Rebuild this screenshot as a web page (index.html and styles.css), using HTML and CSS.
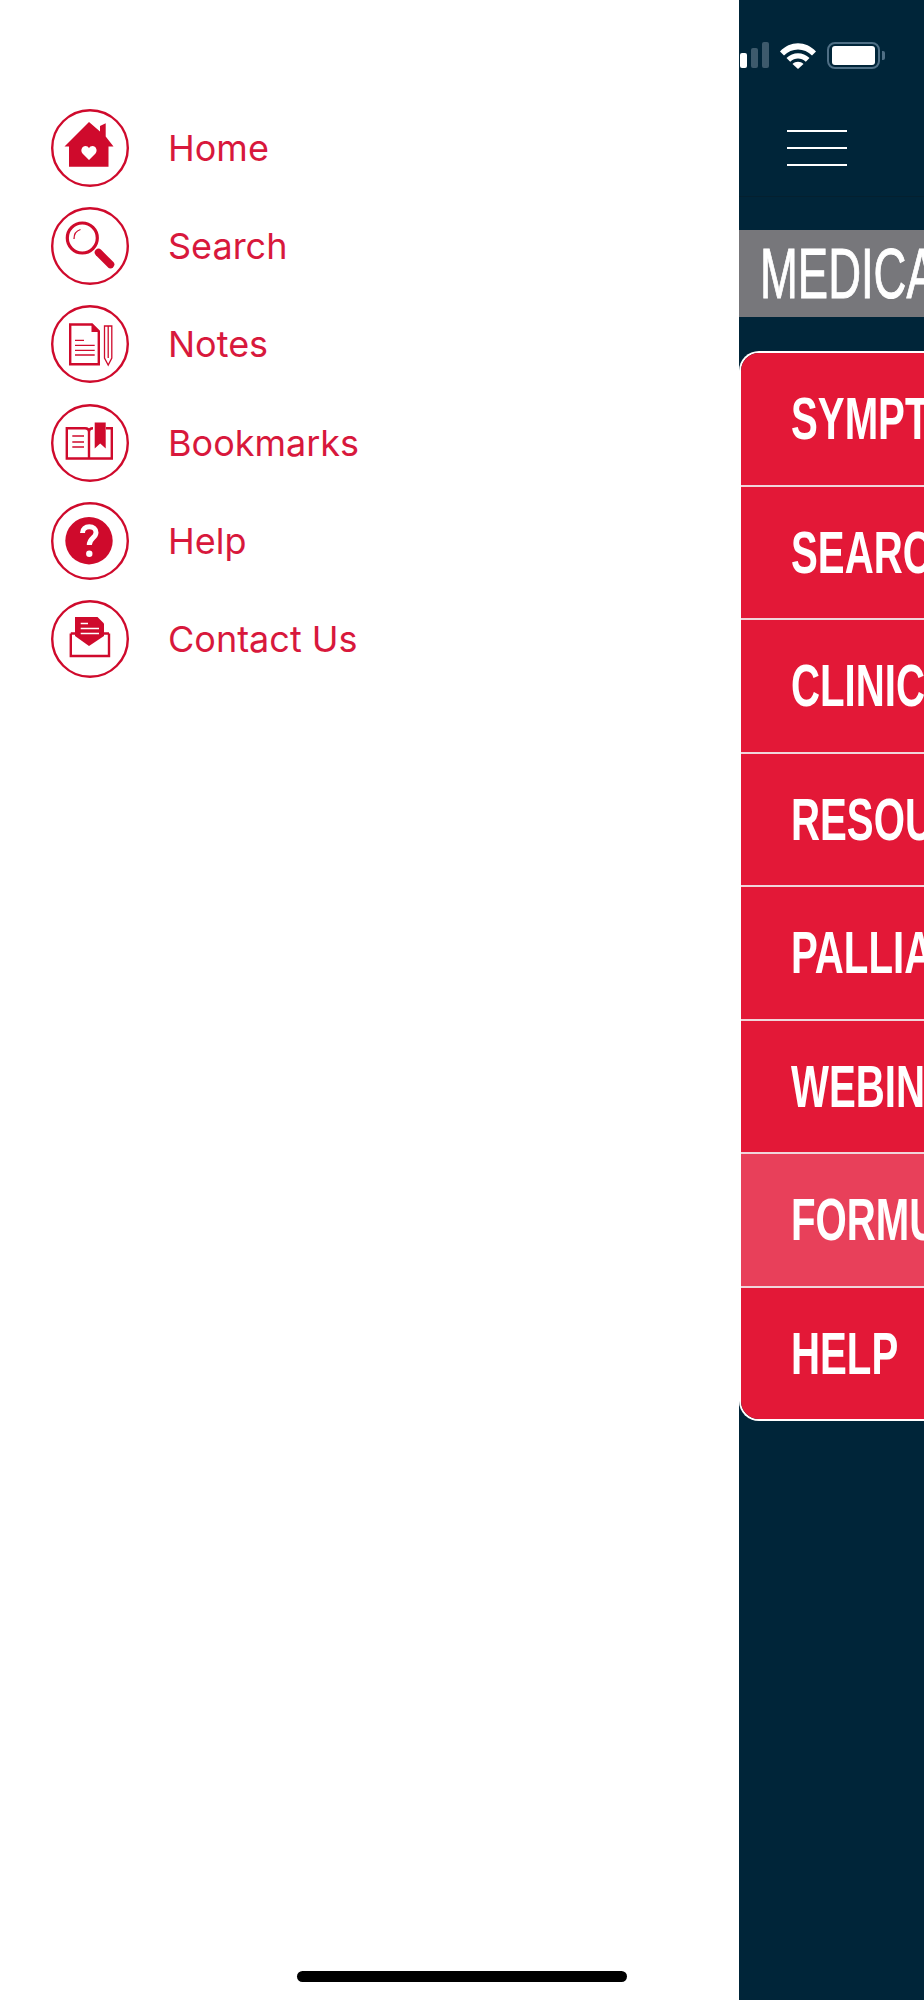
FILE: index.html
```html
<!DOCTYPE html>
<html lang="en">
<head>
    <meta charset="UTF-8">
    <meta name="viewport" content="width=device-width, initial-scale=1.0">
    <title>Menu</title>
    <link rel="stylesheet" href="styles.css">
</head>
<body>

    <nav class="drawer">
        <a class="drawer-item">
            <svg class="drawer-icon" viewBox="0 0 78 78">
                <circle class="ring" cx="39" cy="39" r="37.8"/>
                <path class="solid" d="M38 13 L49 22.5 V17 L54.7 14.3 V27.5 L62.5 37.5 H57.5 V57.7 H18 V37.5 H13.5 Z"/>
                <path class="cut" d="M38 51 L31.5 44.5 C29 41.5 31 37 34.5 37 C36 37 37.3 37.8 38 39.2 C38.7 37.8 40 37 41.5 37 C45 37 47 41.5 44.5 44.5 Z"/>
            </svg>
            <span>Home</span>
        </a>
        <a class="drawer-item">
            <svg class="drawer-icon" viewBox="0 0 78 78">
                <circle class="ring" cx="39" cy="39" r="37.8"/>
                <circle class="line thick" cx="31.3" cy="31" r="15"/>
                <path class="line thin" d="M23 32 C23 27 26 23.5 29.5 22.5"/>
                <path class="handle" d="M47.5 45.5 L59.5 57.5"/>
            </svg>
            <span>Search</span>
        </a>
        <a class="drawer-item">
            <svg class="drawer-icon" viewBox="0 0 78 78">
                <circle class="ring" cx="39" cy="39" r="37.8"/>
                <path class="line" d="M19.2 19.5 H41 L47.8 26.3 V59.2 H19.2 Z"/>
                <path class="solid" d="M40.5 18.5 L49 27 H40.5 Z"/>
                <path class="line thin" d="M24 35.3 H33 M24 40.3 H43.7 M24 45.3 H43.7 M24 50 H43.7"/>
                <path class="line thin" d="M53.5 21 H60.8 V53 L57.2 60 L53.5 53 Z M57.2 21 V53"/>
            </svg>
            <span>Notes</span>
        </a>
        <a class="drawer-item">
            <svg class="drawer-icon" viewBox="0 0 78 78">
                <circle class="ring" cx="39" cy="39" r="37.8"/>
                <path class="line" d="M38 54.5 H15.8 V24.2 H34 Q38 24.2 38 28 Z M38 28 Q38 24.2 42 24.2 M55 24.2 H60.8 V54.5 H38 V28"/>
                <path class="solid" d="M43.7 18.6 H54.7 V44.6 L49.2 39.5 L43.7 44.6 Z"/>
                <path class="line thin" d="M21.3 32 H33 M21.3 38 H33 M21.3 43 H33"/>
            </svg>
            <span>Bookmarks</span>
        </a>
        <a class="drawer-item">
            <svg class="drawer-icon" viewBox="0 0 78 78">
                <circle class="ring" cx="39" cy="39" r="37.8"/>
                <circle class="solid" cx="38" cy="38.7" r="23.7"/>
                <path class="question" d="M31.5 31 C31.5 27 34.5 24.8 38.3 24.8 C42.3 24.8 45 27.2 45 30.5 C45 36 38.3 36 38.3 43"/>
                <circle class="cut" cx="38.3" cy="51.8" r="3.2"/>
            </svg>
            <span>Help</span>
        </a>
        <a class="drawer-item">
            <svg class="drawer-icon" viewBox="0 0 78 78">
                <circle class="ring" cx="39" cy="39" r="37.8"/>
                <path class="line" d="M19.8 33.5 V56 H58 V33.5"/>
                <path class="line" d="M19.8 33.5 H24 M58 33.5 H53"/>
                <path class="solid" d="M24 17 H46.5 L53 23.5 V36 L38 46 L24 36 Z"/>
                <path class="cut-line" d="M29.7 23.6 H37 M29.7 28.5 H48 M29.7 33.6 H48"/>
            </svg>
            <span>Contact Us</span>
        </a>
    </nav>

    <main class="panel">
        <div class="status-bar">
            <div class="signal">
                <i class="on"></i>
                <i class="mid"></i>
                <i class="high"></i>
            </div>
            <svg class="wifi" viewBox="0 0 38 27">
                <path d="M1 9.5 C11 -1.5 27 -1.5 37 9.5 L33 13.5 C25.5 5.5 12.5 5.5 5 13.5 Z"/>
                <path d="M7.5 16 C14 9.5 24 9.5 30.5 16 L26.8 19.7 C22 15.5 16 15.5 11.2 19.7 Z"/>
                <path d="M13.5 22 C16.5 19 21.5 19 24.5 22 L19 27 Z"/>
            </svg>
            <div class="battery"><div class="battery-fill"></div></div>
            <div class="battery-nub"></div>
        </div>

        <div class="header">
            <div class="burger">
                <span></span>
                <span></span>
                <span></span>
            </div>
        </div>

        <div class="title-bar"><span>MEDICAL</span></div>

        <div class="menu">
            <div class="menu-item"><span>SYMPTOMS</span></div>
            <div class="menu-item"><span>SEARCH</span></div>
            <div class="menu-item"><span>CLINICAL</span></div>
            <div class="menu-item"><span>RESOURCES</span></div>
            <div class="menu-item"><span>PALLIATIVE</span></div>
            <div class="menu-item"><span>WEBINARS</span></div>
            <div class="menu-item active"><span>FORMULARY</span></div>
            <div class="menu-item"><span>HELP</span></div>
        </div>
    </main>

    <div class="home-bar"></div>

</body>
</html>
```

FILE: styles.css
```css
body {
    margin: 0;
    width: 924px;
    height: 2000px;
    display: flex;
    overflow: hidden;
    position: relative;
    background-color: #fff;
    font-family: Inter, 'Noto Sans', sans-serif;
}

.drawer {
    width: 739px;
    flex-shrink: 0;
    box-sizing: border-box;
    padding: 109px 0 0 51px;
    display: flex;
    flex-direction: column;
    gap: 20.2px;
}

.drawer-item {
    display: flex;
    align-items: center;
    gap: 39px;
    height: 78px;
    color: #d8183c;
    font-size: 36px;
}

.drawer-icon {
    width: 78px;
    height: 78px;
    flex-shrink: 0;
}

.ring {
    fill: none;
    stroke: #cf0a2c;
    stroke-width: 2.4;
}

.solid {
    fill: #cf0a2c;
}

.cut {
    fill: #fff;
}

.line {
    fill: none;
    stroke: #cf0a2c;
    stroke-width: 2.4;
}

.line.thick {
    stroke-width: 3.2;
}

.line.thin {
    stroke-width: 1.3;
}

.handle {
    fill: none;
    stroke: #cf0a2c;
    stroke-width: 7.5;
    stroke-linecap: round;
}

.question {
    fill: none;
    stroke: #fff;
    stroke-width: 5;
}

.cut-line {
    fill: none;
    stroke: #fff;
    stroke-width: 1.5;
}

.panel {
    width: 185px;
    flex-shrink: 0;
    flex-grow: 1;
    overflow: hidden;
    background-color: #002539;
}

.status-bar {
    height: 88px;
    box-sizing: border-box;
    padding: 42px 0 0 1px;
    display: flex;
    align-items: flex-start;
}

.signal {
    display: flex;
    align-items: flex-end;
    gap: 4px;
    height: 26px;
}

.signal i {
    display: block;
    width: 7px;
    border-radius: 2px;
    background-color: #3d5a6c;
}

.signal .on {
    height: 15px;
    background-color: #fff;
}

.signal .mid {
    height: 20px;
}

.signal .high {
    height: 26px;
}

.wifi {
    width: 38px;
    height: 27px;
    margin-left: 10px;
    fill: #fff;
}

.battery {
    width: 53px;
    height: 27px;
    margin-left: 10px;
    box-sizing: border-box;
    border: 2px solid #4f6f85;
    border-radius: 8px;
    padding: 2px 3px;
}

.battery-fill {
    height: 100%;
    background-color: #fff;
    border-radius: 3px;
}

.battery-nub {
    width: 3px;
    height: 9px;
    margin: 9px 0 0 2px;
    background-color: #4f6f85;
    border-radius: 0 2px 2px 0;
}

.header {
    height: 109px;
    box-sizing: border-box;
    padding: 42px 0 0 48px;
    border-bottom: 1px solid #04202f;
}

.burger {
    width: 60px;
    display: flex;
    flex-direction: column;
    gap: 15px;
}

.burger span {
    display: block;
    height: 2px;
    background-color: #fff;
}

.title-bar {
    margin-top: 33px;
    height: 87px;
    background-color: #77777b;
    padding-left: 21px;
    display: flex;
    align-items: center;
    white-space: nowrap;
}

.title-bar span {
    color: #fff;
    font-family: 'Liberation Sans Narrow', 'Liberation Sans', sans-serif;
    font-size: 71px;
    -webkit-text-stroke: 1px #fff;
    transform: scaleX(0.64);
    transform-origin: left center;
}

.menu {
    margin: 34px 0 0 0;
    box-sizing: border-box;
    border: 2px solid #fff;
    border-right: none;
    border-radius: 20px 0 0 20px;
    overflow: hidden;
}

.menu-item {
    height: 131.5px;
    background-color: #e31837;
    padding-left: 50px;
    display: flex;
    align-items: center;
    white-space: nowrap;
    border-bottom: 2px solid #f0d5da;
}

.menu-item:last-child {
    border-bottom: none;
}

.menu-item.active {
    background-color: #e8405a;
}

.menu-item span {
    color: #fff;
    font-family: 'Liberation Sans Narrow', 'Liberation Sans', sans-serif;
    font-weight: bold;
    font-size: 60px;
    transform: scaleX(0.67);
    transform-origin: left center;
}

.home-bar {
    position: absolute;
    left: 297px;
    top: 1971px;
    width: 330px;
    height: 11px;
    border-radius: 6px;
    background-color: #000;
}
```
